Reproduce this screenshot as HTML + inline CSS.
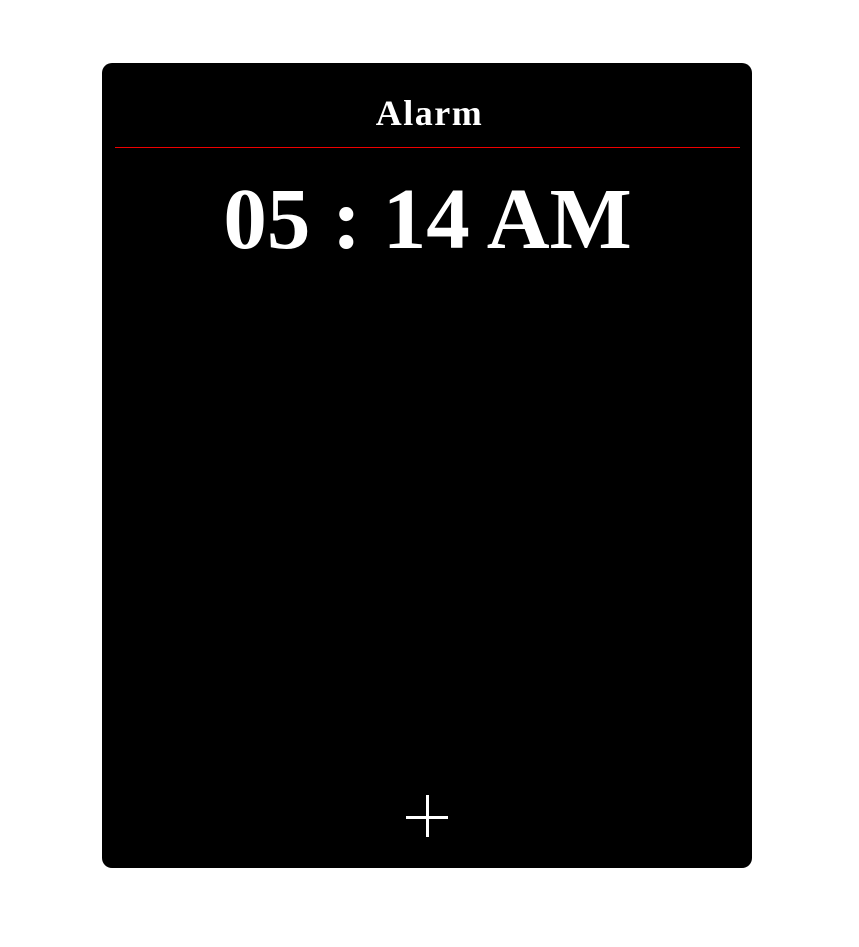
<!DOCTYPE html>
<html><head><style>
html,body{margin:0;padding:0;background:#fff;width:859px;height:947px;overflow:hidden}
.card{position:absolute;left:102px;top:63px;width:650px;height:805px;background:#000;border-radius:10px}
.title{position:absolute;left:0;width:859px;top:93px;text-align:center;color:#fff;font:bold 36px "Liberation Serif",serif;line-height:40px;letter-spacing:1.5px}
.line{position:absolute;left:115px;width:625px;top:147px;height:1px;background:#e00}
.time{position:absolute;left:-2px;width:859px;top:171px;text-align:center;color:#fff;font:bold 87px "Liberation Serif",serif;line-height:96px;white-space:nowrap}
.ph{position:absolute;left:406px;top:816px;width:42px;height:3px;background:#fff}
.pv{position:absolute;left:426px;top:795px;width:3px;height:42px;background:#fff}
</style></head><body>
<div class="card"></div>
<div class="title">Alarm</div>
<div class="line"></div>
<div class="time">05 : 14 AM</div>
<div class="ph"></div><div class="pv"></div>
</body></html>
